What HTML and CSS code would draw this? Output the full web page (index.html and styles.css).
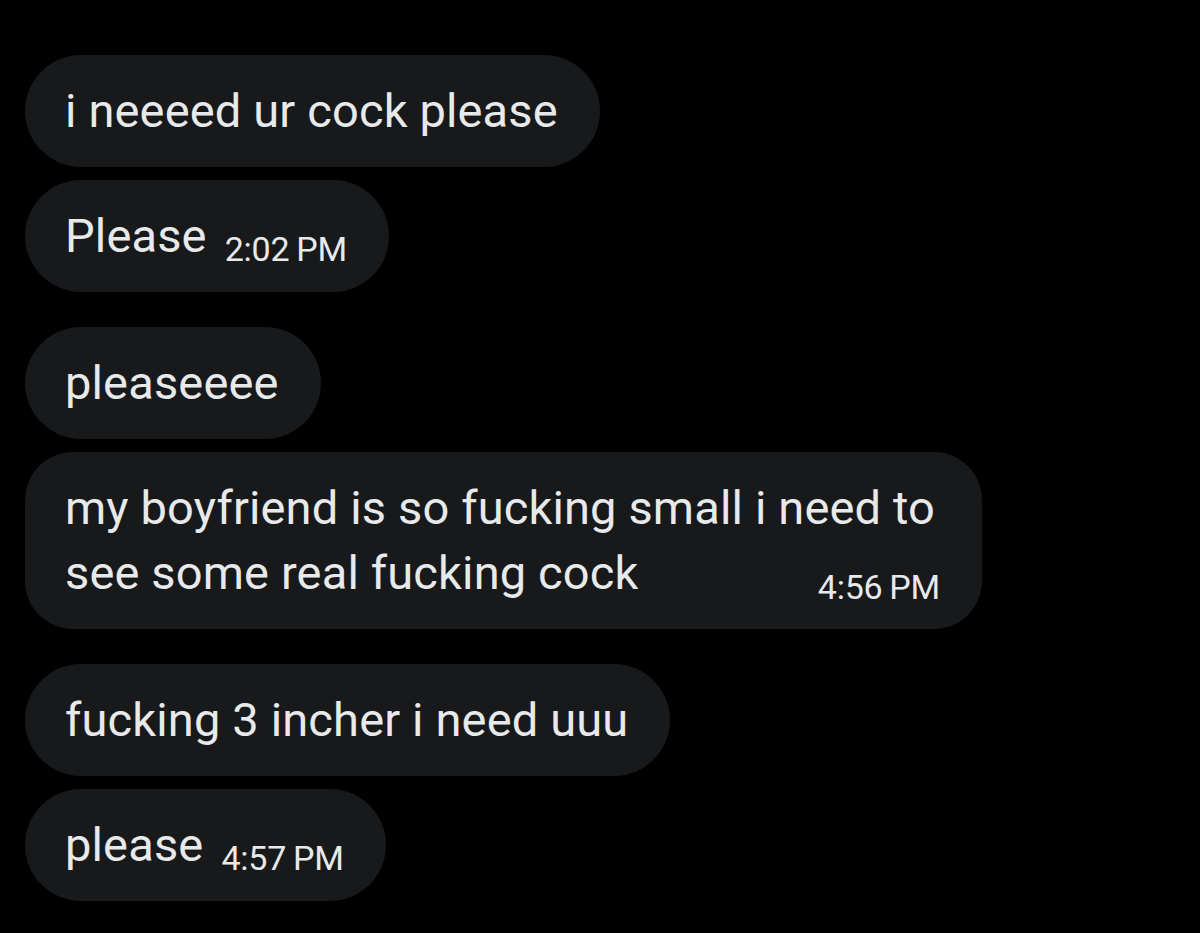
FILE: index.html
```html
<!DOCTYPE html>
<html lang="en">
<head>
<meta charset="utf-8">
<title>Messages</title>
<link rel="stylesheet" href="styles.css">
</head>
<body>
<main class="chat">
  <div class="group">
    <div class="bubble"><span class="text">i neeeed ur cock please</span></div>
    <div class="bubble"><span class="text">Please</span><span class="time">2:02&#8201;PM</span></div>
  </div>
  <div class="group">
    <div class="bubble"><span class="text">pleaseeee</span></div>
    <div class="bubble multi"><span class="time end">4:56&#8201;PM</span><span class="text">my boyfriend is so fucking small i need to see some real fucking cock</span></div>
  </div>
  <div class="group">
    <div class="bubble"><span class="text">fucking 3 incher i need uuu</span></div>
    <div class="bubble"><span class="text">please</span><span class="time">4:57&#8201;PM</span></div>
  </div>
</main>
</body>
</html>
```
FILE: styles.css
```css
html, body {
  margin: 0;
  background: #000;
}
body {
  font-family: Roboto, "Noto Sans", "Liberation Sans", sans-serif;
  color: #e7e9ea;
}
.chat {
  padding: 55px 0 0 25px;
  display: flex;
  flex-direction: column;
  gap: 35px;
}
.group {
  display: flex;
  flex-direction: column;
  align-items: flex-start;
  gap: 13px;
}
.bubble {
  background: #18191b;
  border-radius: 56px;
  padding: 23px 42px 24px 40px;
  max-width: 875px;
  font-size: 47px;
  line-height: 65px;
  letter-spacing: 0.15px;
}
.bubble.multi {
  border-radius: 48px;
  display: flex;
  flex-direction: column-reverse;
}
.time {
  display: inline-block;
  font-size: 34px;
  line-height: 34px;
  margin-left: 18px;
  vertical-align: -9px;
  letter-spacing: -0.2px;
}
.time.end {
  align-self: flex-end;
  margin: -35px 0 1px;
}
```
